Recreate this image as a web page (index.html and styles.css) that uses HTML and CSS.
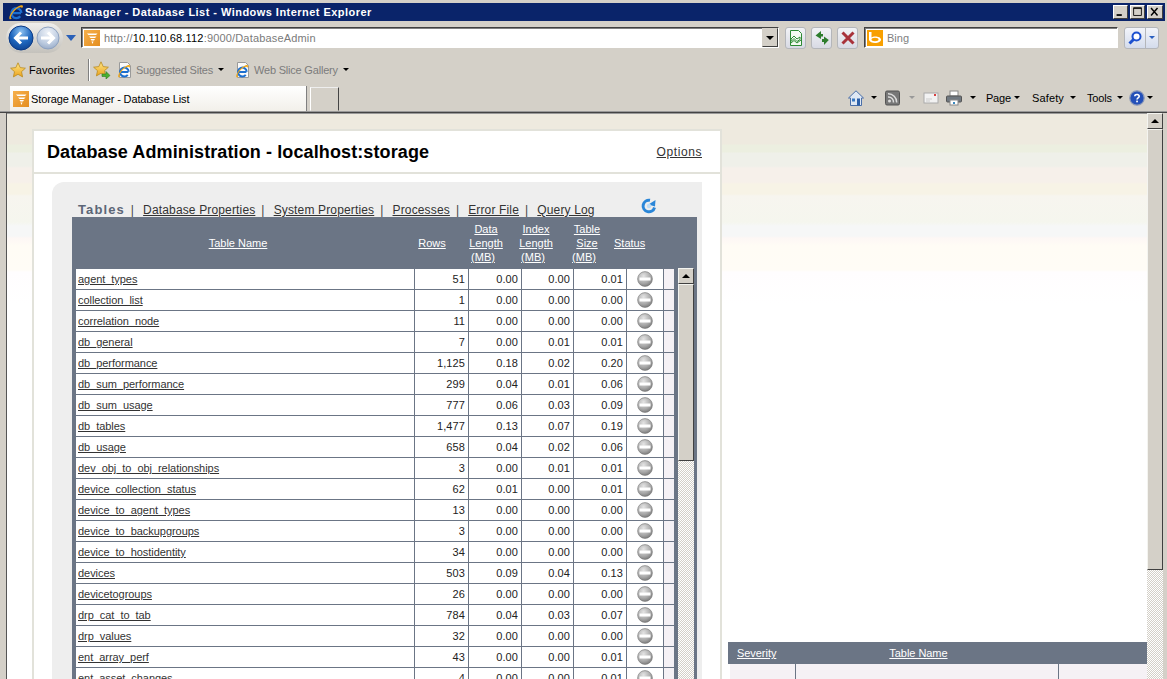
FILE: index.html
```html
<!DOCTYPE html>
<html lang="en">
<head>
<meta charset="utf-8">
<title>Storage Manager - Database List - Windows Internet Explorer</title>
<link rel="stylesheet" href="styles.css">
</head>
<body>
<svg class="defs" width="0" height="0" aria-hidden="true">
  <defs>
    <radialGradient id="gStatus" cx="0.4" cy="0.3" r="0.8"><stop offset="0" stop-color="#e4e4e4"/><stop offset="0.6" stop-color="#a8a8a8"/><stop offset="1" stop-color="#6e6e6e"/></radialGradient>
    <radialGradient id="gBack" cx="0.5" cy="0.25" r="0.85"><stop offset="0" stop-color="#8ec2f0"/><stop offset="0.5" stop-color="#1f68c0"/><stop offset="1" stop-color="#0b3a86"/></radialGradient>
    <radialGradient id="gFwd" cx="0.5" cy="0.25" r="0.85"><stop offset="0" stop-color="#eef2f8"/><stop offset="0.6" stop-color="#bccbe0"/><stop offset="1" stop-color="#8ea2c0"/></radialGradient>
    <linearGradient id="gStar" x1="0" y1="0" x2="0" y2="1"><stop offset="0" stop-color="#ffe98a"/><stop offset="1" stop-color="#eca21c"/></linearGradient>
    <linearGradient id="gOrange" x1="0" y1="0" x2="1" y2="1"><stop offset="0" stop-color="#f6b04c"/><stop offset="1" stop-color="#e48e20"/></linearGradient>
    <symbol id="status" viewBox="0 0 16 16">
      <circle cx="8" cy="8" r="7.4" fill="url(#gStatus)" stroke="#777" stroke-width="0.6"/>
      <rect x="2.5" y="6.5" width="11" height="3" fill="#fff"/>
    </symbol>
    <symbol id="favicon" viewBox="0 0 16 16">
      <rect width="16" height="16" fill="url(#gOrange)"/>
      <path d="M3 3.5h10.5L12 5H4.5zM5 6.5h7.5L11 8H6.5zM6.5 9h4.500L10 10.500H7.500zM7.500 11.500h2L8.500 14z" fill="#fff"/>
    </symbol>
    <symbol id="ie" viewBox="0 0 16 16">
      <path d="M4.500 9.200h8.500M12.300 12.300A5 5 0 1 1 13.400 8.800" fill="none" stroke="#1c6fd0" stroke-width="2.300"/>
      <path d="M1.500 15C.5 12.800 4 6 10 2.500c2.600-1.500 4.800-1.800 5-.6.100.7-.5 1.700-1.200 2.500.1-1.400-1.200-1.700-3.400-.6C6 6.300 2.500 11.500 2.900 13.700c.1.500.5.700 1 .8-1 .8-2 1-2.400.5z" fill="#f0a818"/>
    </symbol>
    <symbol id="pageie" viewBox="0 0 16 16">
      <path d="M2.500.5h8l3 3v12h-11z" fill="#fafafa" stroke="#9a9a9a"/>
      <use href="#ie" x="0" y="2" width="14" height="14"/>
    </symbol>
    <symbol id="star" viewBox="0 0 16 16">
      <path d="M8 .8l2.200 4.800 5.200.6-3.900 3.500 1.100 5.200L8 12.300l-4.600 2.600 1.100-5.200L.6 6.200l5.200-.6z" fill="url(#gStar)" stroke="#b98a20" stroke-width="0.8"/>
    </symbol>
  </defs>
</svg>

<div class="window">
  <header class="titlebar">
    <svg class="ico16 title-ico"><use href="#ie"/></svg>
    <span class="title-text">Storage Manager - Database List - Windows Internet Explorer</span>
    <div class="win-btns">
      <span class="win-btn"><svg viewBox="0 0 15 13"><rect x="3" y="9" width="6" height="2" fill="#000"/></svg></span>
      <span class="win-btn"><svg viewBox="0 0 15 13"><path d="M3 1.500h9v9H3zM3 2.500h9" fill="none" stroke="#000"/></svg></span>
      <span class="win-btn win-close"><svg viewBox="0 0 15 13"><path d="M3.500 2l7.500 8.500M11 2l-7.500 8.500" stroke="#000" stroke-width="1.700"/></svg></span>
    </div>
  </header>

  <nav class="navrow">
    <div class="pill">
      <svg class="back" viewBox="0 0 26 26"><circle cx="13" cy="13" r="12" fill="url(#gBack)" stroke="#0b3a86"/><path d="M20 13H8M13 7.500L7.500 13l5.500 5.500" fill="none" stroke="#fff" stroke-width="3"/></svg>
      <svg class="fwd" viewBox="0 0 24 24"><circle cx="12" cy="12" r="11" fill="url(#gFwd)" stroke="#8ea2c0"/><path d="M5 12h12M12 6.500l5.500 5.500-5.500 5.500" fill="none" stroke="#fff" stroke-width="3"/></svg>
    </div>
    <span class="nav-drop"></span>
    <div class="addr">
      <svg class="ico16"><use href="#favicon"/></svg>
      <span class="url">http://<b>10.110.68.112</b>:9000/DatabaseAdmin</span>
      <span class="combo"><i class="caret caret-lg"></i></span>
    </div>
    <span class="iebtn iebtn-first"><svg class="ico16"  viewBox="0 0 16 16"><path d="M2.500.5h8l3 3v12h-11z" fill="#f4fbf2" stroke="#2d8a34"/><path d="M3 9l3-3 3 3 3-2v2.500l-3 2-3-3-3 3zM3 13l3-2.500 3 2.500 4-3" fill="none" stroke="#2d8a34"/></svg></span>
    <span class="iebtn"><svg class="ico16" viewBox="0 0 16 16"><path d="M7 1L1.500 5.500 7 9V6.500h2V4H7zM10 15l4.800-5L10 6.500V9H8v3h2z" fill="#2e7d2e"/></svg></span>
    <span class="iebtn"><svg class="ico16" viewBox="0 0 16 16"><path d="M2.500 2.500l11 11M13.500 2.500l-11 11" stroke="#a8323a" stroke-width="3"/></svg></span>
    <div class="search">
      <svg class="ico16" viewBox="0 0 16 16"><rect width="16" height="16" fill="#f8a000"/><path d="M2 2h2.500v5.500C5.500 6 13.500 5.500 14 9.500c.3 4-10.500 5-12 .5z" fill="#fff"/><ellipse cx="8" cy="9.500" rx="3.500" ry="1.700" fill="#f8a000"/></svg>
      <span class="search-text">Bing</span>
    </div>
    <div class="searchbtn">
      <span class="sb-main"><svg class="ico16" viewBox="0 0 16 16"><circle cx="9.500" cy="6.500" r="4" fill="#fff" stroke="#1c50d0" stroke-width="2"/><path d="M6.500 9.500L2.500 13.500" stroke="#1c50d0" stroke-width="3"/></svg></span>
      <span class="sb-drop"><i class="caret caret-blue"></i></span>
    </div>
  </nav>

  <div class="favrow">
    <svg class="ico16 fav-star"><use href="#star"/></svg>
    <span class="tb-text fav-label">Favorites</span>
    <span class="fav-sep"></span>
    <svg class="ico16 fav-add" viewBox="0 0 18 18"><use href="#star" width="16" height="16"/><path d="M9 13h4v-2.500l4 4-4 3.500v-2.500H9z" fill="#49b030" stroke="#2d7a20" stroke-width="0.6"/></svg>
    <svg class="ico16 fav-ie"><use href="#pageie"/></svg>
    <span class="tb-text muted sug">Suggested Sites</span>
    <i class="caret caret-sug"></i>
    <svg class="ico16 fav-ie2"><use href="#pageie"/></svg>
    <span class="tb-text muted web">Web Slice Gallery</span>
    <i class="caret caret-web"></i>
  </div>

  <div class="tabrow">
    <div class="tab">
      <svg class="ico16"><use href="#favicon"/></svg>
      <span class="tb-text">Storage Manager - Database List</span>
    </div>
    <div class="newtab"></div>
    <div class="cmd">
      <svg class="ico16 c-home" viewBox="0 0 16 16"><path d="M8 .8L.5 8h2v7.500h11V8h2z" fill="#dfe8f4" stroke="#4a6ea8"/><rect x="9" y="8.500" width="3" height="7" fill="#2c5fa8"/><rect x="4" y="8.500" width="3" height="3" fill="#3a78c0"/></svg>
      <i class="caret c-a1"></i>
      <svg class="ico16 c-rss" viewBox="0 0 16 16"><rect x=".5" y="1" width="14" height="14" rx="1.500" fill="#777" stroke="#555"/><circle cx="4.500" cy="11" r="1.500" fill="#ddd"/><path d="M3 7a5 5 0 0 1 5.500 5.500M3 3.800a8.500 8.500 0 0 1 8.700 8.700" fill="none" stroke="#ddd" stroke-width="1.500"/></svg>
      <i class="caret caret-grey c-a2"></i>
      <svg class="ico16 c-mail" viewBox="0 0 16 16"><rect x="1" y="3" width="14" height="10" fill="#f2f2f2" stroke="#aaa"/><path d="M3 9h6M3 11h4" stroke="#ccc"/><rect x="11" y="4" width="2" height="2" fill="#d84040"/></svg>
      <svg class="ico16 c-print" viewBox="0 0 16 16"><rect x="4" y="1" width="8" height="5" fill="#fff" stroke="#888"/><rect x=".5" y="6" width="15" height="6" rx="1" fill="#707880" stroke="#555"/><rect x="4" y="10" width="8" height="5" fill="#fff" stroke="#888"/><rect x="7" y="12" width="2" height="2" fill="#3a8ac0"/></svg>
      <i class="caret c-a3"></i>
      <span class="tb-text c-page">Page</span>
      <i class="caret c-a4"></i>
      <span class="tb-text c-safety">Safety</span>
      <i class="caret c-a4s"></i>
      <span class="tb-text c-tools">Tools</span>
      <i class="caret c-a4t"></i>
      <svg class="ico16 c-help" viewBox="0 0 16 16"><circle cx="8" cy="8" r="7.200" fill="#2450b8" stroke="#8a98b8" stroke-width="1.200"/><path d="M5.800 6.200C6 3.800 10.500 4 10.200 6.400c-.2 1.500-2.200 1.500-2.200 3.200" fill="none" stroke="#fff" stroke-width="1.600"/><rect x="7.200" y="10.600" width="1.700" height="1.700" fill="#fff"/></svg>
      <i class="caret c-a5"></i>
    </div>
  </div>

  <div class="viewport">
    <main class="page">
      <section class="panel">
        <div class="panel-head">
          <h1 class="panel-title">Database Administration - localhost:storage</h1>
          <a class="lnk options">Options</a>
        </div>
        <div class="box">
          <div class="tabs">
            <span class="tabs-cur">Tables</span><span class="bar">|</span>
            <a class="lnk">Database Properties</a><span class="bar">|</span>
            <a class="lnk">System Properties</a><span class="bar">|</span>
            <a class="lnk">Processes</a><span class="bar">|</span>
            <a class="lnk">Error File</a><span class="bar">|</span>
            <a class="lnk">Query Log</a>
            <svg class="ico16 refresh" viewBox="0 0 16 16"><path d="M13.500 9.500A5.800 5.800 0 1 1 9 2.300" fill="none" stroke="#2a86d8" stroke-width="3"/><path d="M7.500 6.500L14 8.500l.5-6.500z" fill="#2a86d8"/><circle cx="8" cy="8" r="2.200" fill="#bcdcf6"/></svg>
          </div>
          <div class="tblwrap">
            <div class="thead">
              <a class="th">Table Name</a>
              <a class="th">Rows</a>
              <div class="th"><a>Data</a><br><a>Length</a><br><a class="mb">(MB)</a></div>
              <div class="th"><a>Index</a><br><a>Length</a><br><a class="mb">(MB)</a></div>
              <div class="th"><a>Table</a><br><a>Size</a><br><a class="mb">(MB)</a></div>
              <a class="th">Status</a>
            </div>
            <div class="tbody">
              <table class="grid">
                <colgroup><col class="c1"><col class="c2"><col class="c3"><col class="c4"><col class="c5"><col class="c6"><col class="c7"></colgroup>
                <tbody>
                  <tr><td><a class="lnk">agent_types</a></td><td>51</td><td>0.00</td><td>0.00</td><td>0.01</td><td class="st"><svg class="ico16"><use href="#status"/></svg></td><td class="gap"></td></tr>
                  <tr><td><a class="lnk">collection_list</a></td><td>1</td><td>0.00</td><td>0.00</td><td>0.00</td><td class="st"><svg class="ico16"><use href="#status"/></svg></td><td class="gap"></td></tr>
                  <tr><td><a class="lnk">correlation_node</a></td><td>11</td><td>0.00</td><td>0.00</td><td>0.00</td><td class="st"><svg class="ico16"><use href="#status"/></svg></td><td class="gap"></td></tr>
                  <tr><td><a class="lnk">db_general</a></td><td>7</td><td>0.00</td><td>0.01</td><td>0.01</td><td class="st"><svg class="ico16"><use href="#status"/></svg></td><td class="gap"></td></tr>
                  <tr><td><a class="lnk">db_performance</a></td><td>1,125</td><td>0.18</td><td>0.02</td><td>0.20</td><td class="st"><svg class="ico16"><use href="#status"/></svg></td><td class="gap"></td></tr>
                  <tr><td><a class="lnk">db_sum_performance</a></td><td>299</td><td>0.04</td><td>0.01</td><td>0.06</td><td class="st"><svg class="ico16"><use href="#status"/></svg></td><td class="gap"></td></tr>
                  <tr><td><a class="lnk">db_sum_usage</a></td><td>777</td><td>0.06</td><td>0.03</td><td>0.09</td><td class="st"><svg class="ico16"><use href="#status"/></svg></td><td class="gap"></td></tr>
                  <tr><td><a class="lnk">db_tables</a></td><td>1,477</td><td>0.13</td><td>0.07</td><td>0.19</td><td class="st"><svg class="ico16"><use href="#status"/></svg></td><td class="gap"></td></tr>
                  <tr><td><a class="lnk">db_usage</a></td><td>658</td><td>0.04</td><td>0.02</td><td>0.06</td><td class="st"><svg class="ico16"><use href="#status"/></svg></td><td class="gap"></td></tr>
                  <tr><td><a class="lnk">dev_obj_to_obj_relationships</a></td><td>3</td><td>0.00</td><td>0.01</td><td>0.01</td><td class="st"><svg class="ico16"><use href="#status"/></svg></td><td class="gap"></td></tr>
                  <tr><td><a class="lnk">device_collection_status</a></td><td>62</td><td>0.01</td><td>0.00</td><td>0.01</td><td class="st"><svg class="ico16"><use href="#status"/></svg></td><td class="gap"></td></tr>
                  <tr><td><a class="lnk">device_to_agent_types</a></td><td>13</td><td>0.00</td><td>0.00</td><td>0.00</td><td class="st"><svg class="ico16"><use href="#status"/></svg></td><td class="gap"></td></tr>
                  <tr><td><a class="lnk">device_to_backupgroups</a></td><td>3</td><td>0.00</td><td>0.00</td><td>0.00</td><td class="st"><svg class="ico16"><use href="#status"/></svg></td><td class="gap"></td></tr>
                  <tr><td><a class="lnk">device_to_hostidentity</a></td><td>34</td><td>0.00</td><td>0.00</td><td>0.00</td><td class="st"><svg class="ico16"><use href="#status"/></svg></td><td class="gap"></td></tr>
                  <tr><td><a class="lnk">devices</a></td><td>503</td><td>0.09</td><td>0.04</td><td>0.13</td><td class="st"><svg class="ico16"><use href="#status"/></svg></td><td class="gap"></td></tr>
                  <tr><td><a class="lnk">devicetogroups</a></td><td>26</td><td>0.00</td><td>0.00</td><td>0.00</td><td class="st"><svg class="ico16"><use href="#status"/></svg></td><td class="gap"></td></tr>
                  <tr><td><a class="lnk">drp_cat_to_tab</a></td><td>784</td><td>0.04</td><td>0.03</td><td>0.07</td><td class="st"><svg class="ico16"><use href="#status"/></svg></td><td class="gap"></td></tr>
                  <tr><td><a class="lnk">drp_values</a></td><td>32</td><td>0.00</td><td>0.00</td><td>0.00</td><td class="st"><svg class="ico16"><use href="#status"/></svg></td><td class="gap"></td></tr>
                  <tr><td><a class="lnk">ent_array_perf</a></td><td>43</td><td>0.00</td><td>0.00</td><td>0.01</td><td class="st"><svg class="ico16"><use href="#status"/></svg></td><td class="gap"></td></tr>
                  <tr><td><a class="lnk">ent_asset_changes</a></td><td>4</td><td>0.00</td><td>0.00</td><td>0.01</td><td class="st"><svg class="ico16"><use href="#status"/></svg></td><td class="gap"></td></tr>
                </tbody>
              </table>
              <div class="sbar sbar-inner">
                <span class="sb-up"><i class="caret caret-up"></i></span>
                <span class="sb-thumb"></span>
              </div>
            </div>
          </div>
        </div>
      </section>
      <aside class="side">
        <div class="side-head"><a>Severity</a><a>Table Name</a></div>
        <div class="side-row"><span class="s1"></span><span class="s2"></span><span class="s3"></span></div>
      </aside>
    </main>
    <div class="sbar sbar-outer">
      <span class="sb-up"><i class="caret caret-up"></i></span>
      <span class="sb-thumb"></span>
    </div>
  </div>
</div>
</body>
</html>
```

FILE: styles.css
```css
* { box-sizing: border-box; }
html, body { margin: 0; padding: 0; height: 100%; overflow: hidden; }
body { font-family: "Liberation Sans", Arial, sans-serif; font-size: 11px; color: #000; background: #d4d0c8; }
.defs { position: absolute; }
.window { width: 1167px; height: 679px; display: flex; flex-direction: column; overflow: hidden; background: #d4d0c8; }
.ico16 { width: 16px; height: 16px; display: block; flex: none; }

/* caret */
.caret { display: block; flex: none; width: 0; height: 0; border-left: 3px solid transparent; border-right: 3px solid transparent; border-top: 3px solid #000; }
.caret-grey { border-top-color: #999; }
.caret-lg { border-left-width: 4px; border-right-width: 4px; border-top-width: 4px; }
.caret-blue { border-top-color: #2a5fc0; }
.caret-up { border-top: 0; border-bottom: 4px solid #000; border-left-width: 4px; border-right-width: 4px; }

/* title bar */
.titlebar { height: 18px; margin: 3px 2px 0 3px; background: #0a246a; display: flex; align-items: center; flex: none; }
.title-ico { margin-left: 5px; }
.title-text { margin-left: 1px; color: #fff; font-weight: 700; font-size: 11px; letter-spacing: 0.46px; white-space: nowrap; }
.win-btns { margin-left: auto; display: flex; gap: 2px; padding-right: 2px; }
.win-btn { width: 15px; height: 14px; background: #d4d0c8; border: 1px solid; border-color: #fff #404040 #404040 #fff; display: block; }
.win-btn svg { display: block; width: 13px; height: 12px; }
.win-close { width: 16px; }

/* nav row */
.navrow { height: 33px; display: flex; align-items: center; flex: none; }
.pill { margin-left: 6px; width: 57px; height: 30px; border-radius: 15px; background: linear-gradient(#f0efec, #c4c2bc); display: flex; align-items: center; padding-left: 2px; }
.back { width: 26px; height: 26px; display: block; flex: none; }
.fwd { width: 24px; height: 24px; display: block; flex: none; margin-left: 2px; }
.nav-drop { margin-left: 3px; width: 0; height: 0; border-left: 5px solid transparent; border-right: 5px solid transparent; border-top: 6px solid #2a60b8; flex: none; }
.addr { margin-left: 5px; width: 698px; height: 21px; background: #fff; border: 1px solid; border-color: #404040 #fff #fff #404040; box-shadow: inset 1px 1px 0 #808080; display: flex; align-items: center; padding-left: 2px; }
.url { margin-left: 4px; padding-top: 1px; color: #7a7a7a; font-size: 11px; letter-spacing: 0.17px; white-space: nowrap; }
.url b { font-weight: 400; color: #000; }
.combo { margin-left: auto; width: 16px; height: 19px; background: #d4d0c8; border: 1px solid; border-color: #d4d0c8 #404040 #404040 #d4d0c8; display: flex; align-items: center; justify-content: center; }
.iebtn { margin-left: 5px; width: 21px; height: 22px; border: 1px solid #b4b6ba; border-radius: 3px; background: linear-gradient(#f2f3f6, #d8dae4); display: flex; align-items: center; justify-content: center; flex: none; }
.iebtn-first { margin-left: 6px; }
.search { margin-left: 6px; width: 254px; height: 21px; background: #fff; border: 1px solid; border-color: #404040 #fff #fff #404040; box-shadow: inset 1px 1px 0 #808080; display: flex; align-items: center; padding-left: 2px; }
.search-text { margin-left: 4px; padding-top: 1px; color: #808080; font-size: 11px; }
.searchbtn { margin-left: 6px; width: 35px; height: 22px; border: 1px solid #b4b6ba; border-radius: 3px; background: linear-gradient(#f2f4fa, #d4dcec); display: flex; flex: none; }
.sb-main { width: 21px; display: flex; align-items: center; justify-content: center; border-right: 1px solid #b4b6ba; }
.sb-drop { flex: 1; display: flex; align-items: center; justify-content: center; }

/* favorites row */
.favrow { height: 31px; display: flex; align-items: center; flex: none; }
.tb-text { font-size: 11px; letter-spacing: -0.12px; white-space: nowrap; color: #000; }
.muted { color: #7c7c7c; letter-spacing: -0.2px; }
.fav-star { margin-left: 10px; }
.fav-label { margin-left: 3px; letter-spacing: 0.07px; }
.fav-sep { margin-left: 13px; width: 1px; height: 22px; background: #808080; box-shadow: 1px 0 0 #fff; }
.fav-add { margin-left: 4px; width: 18px; height: 18px; }
.fav-ie { margin-left: 6px; }
.sug { margin-left: 3px; }
.caret-sug { margin-left: 5px; }
.fav-ie2 { margin-left: 11px; }
.web { margin-left: 3px; }
.caret-web { margin-left: 5px; }

/* tab row */
.tabrow { height: 27px; display: flex; align-items: flex-end; flex: none; border-bottom: 1px solid #999; }
.tab { margin-left: 10px; width: 297px; height: 25px; background: linear-gradient(#fff, #f2f0ea); border-right: 1px solid #808080; display: flex; align-items: center; padding-left: 3px; gap: 2px; }
.newtab { margin-left: 3px; width: 29px; height: 24px; background: #d4d0c8; border: 1px solid; border-color: #eee #444 #d4d0c8 #fff; }
.cmd { margin-left: auto; height: 25px; display: flex; align-items: center; padding: 0 14px 2px 0; }
.c-a1 { margin-left: 7px; }
.c-rss { margin-left: 8px; }
.c-a2 { margin-left: 8px; }
.c-mail { margin-left: 8px; }
.c-print { margin-left: 7px; }
.c-a3 { margin-left: 8px; }
.c-page { margin-left: 10px; }
.c-a4 { margin-left: 3px; }
.c-a4s { margin-left: 6px; }
.c-a4t { margin-left: 5px; }
.c-safety { margin-left: 12px; letter-spacing: 0.1px; }
.c-tools { margin-left: 11px; }
.c-help { margin-left: 6px; }
.c-a5 { margin-left: 2px; }

/* viewport */
.viewport { flex: 1; min-height: 0; display: flex; padding: 0 3px 0 6px; border-top: 1px solid #444; }
.viewport::before { content: ""; width: 1px; background: #555; flex: none; }
.page { width: 1140px; flex: none; height: 100%; overflow: hidden; display: flex; align-items: flex-start; padding: 15px 0 0 25px; border-top: 1px solid #999;
  background: #fff linear-gradient(#eeeadf 0, #eeeadf 30px, #ecefe0 31px, #ecefe0 38px, #eff0e9 39px, #eff0e9 52px, #f6f0ea 54px, #f6f0ea 68px, #f7f3e6 70px, #f7f3e6 80px, #f7f5ef 82px, #f5f6ee 108px, #f6f7f7 112px, #f6f7f7 122px, #fdf7f5 124px, #fffcf5 132px, #fffcf6 156px, #fffdfe 158px, #fff 190px); }

/* panel */
.panel { width: 690px; flex: none; background: #fff; border: 2px solid #e2e2da; border-bottom: 0; }
.panel-head { height: 41px; display: flex; align-items: center; justify-content: space-between; padding: 1px 18px 0 13px; box-shadow: 0 2px 0 #e2e2da; }
.panel-title { margin: 0; font-size: 18px; font-weight: 700; letter-spacing: 0.11px; white-space: nowrap; color: #000; }
.lnk { color: #333; text-decoration: underline; white-space: nowrap; }
.options { font-size: 12px; letter-spacing: 0.58px; }
.box { margin: 10px 18px 0; padding: 0 5px 0 20px; border-radius: 12px 0 0 0; background: #eee; }
.tabs { height: 35px; display: flex; align-items: flex-end; font-size: 12px; letter-spacing: 0.15px; padding-left: 6px; line-height: 14px; }
.tabs-cur { font-weight: 700; font-size: 13px; color: #5c6677; letter-spacing: 1.1px; }
.bar { margin: 0 9px 0 6px; color: #444; }
.refresh { margin-left: 46px; margin-bottom: 3px; }

/* table */
.tblwrap { background: #6b7585; padding-left: 4px; padding-right: 3px; }
.thead { height: 52px; margin-left: -4px; display: grid; grid-template-columns: 332px 56px 52px 48px 54px 31px; align-items: center; text-align: center; color: #fff; line-height: 14px; font-size: 11px; }
.th { color: #fff; }
a.th, .th a { color: #fff; text-decoration: underline; }
.mb { margin-right: 6px; }
.tbody { display: flex; align-items: flex-start; }
.grid { width: 598px; table-layout: fixed; border-collapse: separate; border-spacing: 0; background: #fff; flex: none; font-size: 11px; }
.c1 { width: 339px; } .c2 { width: 54px; } .c3 { width: 53px; } .c4 { width: 52px; } .c5 { width: 53px; } .c6 { width: 37px; } .c7 { width: 10px; }
.grid td { height: 21px; padding: 0 3px 0 0; text-align: right; border-right: 1px solid #6b7585; border-bottom: 1px solid #6b7585; color: #222; letter-spacing: 0.1px; white-space: nowrap; overflow: hidden; }
.grid td:first-child { text-align: left; padding-left: 2px; }
.grid .lnk { letter-spacing: -0.05px; }
.grid td.st { padding: 0 0 0 10px; }
.grid td.gap { background: #f5f1f5; padding: 0; border-right: 0; }

/* scrollbars */
.sbar { width: 16px; flex: none; display: flex; flex-direction: column; align-items: center; background: repeating-conic-gradient(#d4d0c8 0 25%, #fff 0 50%) 0 0 / 2px 2px; }
.sbar-inner { margin: -1px 0 0 4px; height: 412px; }
.sb-up, .sb-thumb { display: flex; align-items: center; justify-content: center; width: 16px; background: #d4d0c8; border: 1px solid; border-color: #f4f4f0 #404040 #404040 #f4f4f0; }
.sb-up { height: 16px; }
.sbar-inner .sb-thumb { height: 177px; }
.sbar-outer { height: 100%; }
.sbar-outer .sb-thumb { height: 441px; }

/* side table */
.side { width: 419px; flex: none; margin: 513px 0 0 6px; }
.side-head { height: 22px; background: #6b7585; display: flex; align-items: center; padding-left: 9px; letter-spacing: -0.05px; }
.side-head a { color: #fff; text-decoration: underline; font-size: 11px; }
.side-head a + a { margin-left: 113px; }
.side-row { height: 40px; display: flex; padding-left: 2px; background: #fff; }
.side-row span { display: block; background: #f5f1f5; border-left: 1px solid #6b7585; }
.s1 { width: 65px; border-left: 0 !important; }
.s2 { width: 263px; }
.s3 { flex: 1; }
```
